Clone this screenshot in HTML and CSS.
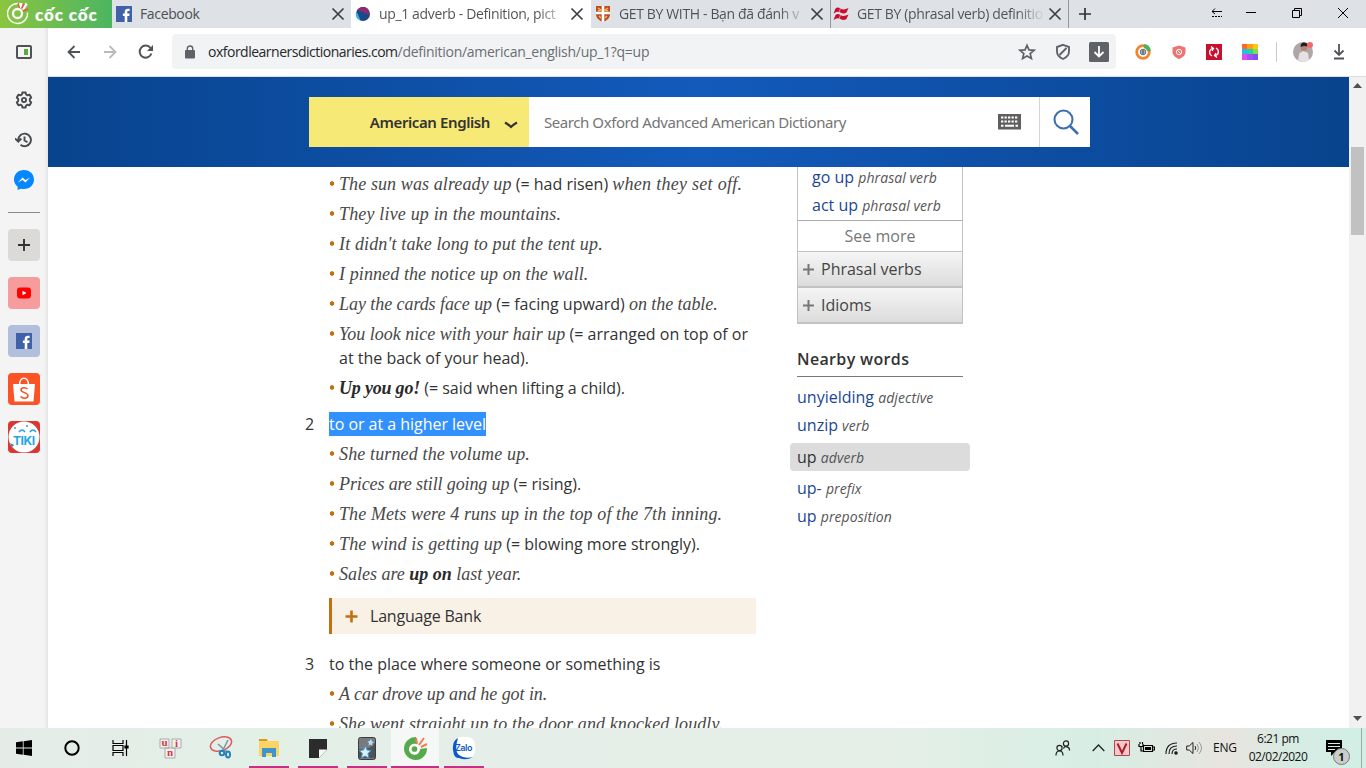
FILE: index.html
```html
<!DOCTYPE html>
<html lang="en">
<head>
<meta charset="utf-8">
<title>up_1 adverb - Definition, pictures</title>
<link rel="stylesheet" href="styles.css">
</head>
<body>
<svg class="defs" width="0" height="0">
  <symbol id="x" viewBox="0 0 14 14"><path d="M1.500 1.500l11 11M12.500 1.500l-11 11" fill="none" stroke="#3c4043" stroke-width="1.700"/></symbol>
  <symbol id="fb" viewBox="0 0 16 16"><path fill="#4060a8" d="M0 0h16v16H0z"/><path fill="#fff" d="M8.700 16V10H6.900V7.600h1.800V6c0-2.200 1.300-3.200 3.200-3.200h1.700V5h-1.200c-.9 0-1.100.4-1.100 1.200v1.400h2.300L13.300 10h-2v6z"/></symbol>
</svg>
<div class="window">
  <header class="tabs">
    <div class="brand">
      <svg width="26" height="26" viewBox="0 0 26 26" fill="none"><path d="M13 3.500A10 10 0 1 0 22.500 12.500" stroke="#fff" stroke-width="1.300"/><circle cx="12.500" cy="13.500" r="4.500" stroke="#fff" stroke-width="2.300"/><path d="M15 8l1-5M17.500 9.500l4-6" stroke="#fff" stroke-width="3"/><path d="M14.500 8L13 3.500M16.500 8.500l3-5M18 11l5-2" stroke="#e8594a" stroke-width="1.500"/></svg>
      <span class="brand-name">cốc cốc</span>
    </div>
    <div class="tab"><svg class="fav" viewBox="0 0 16 16"><use href="#fb"/></svg><span class="t1">Facebook</span><svg class="close"><use href="#x"/></svg></div>
    <div class="tab active"><svg class="fav" viewBox="0 0 16 16"><circle cx="8" cy="8" r="7" fill="#1d4a86"/><path d="M1.500 5C4 1 9-.5 13 3l2 6c-4-1-9-5-13.500-4z" fill="#8b2b73"/><path d="M1 6c2 1 3 5 4.500 8.500C2.500 13.500 0 10 1 6z" fill="#35b5e8"/></svg><span class="fade">up_1 adverb - Definition, pict</span><svg class="close"><use href="#x"/></svg></div>
    <div class="tab"><svg class="fav" viewBox="0 0 16 16"><path d="M1 0h14v8c0 4-3 6.500-7 8-4-1.500-7-4-7-8z" fill="#bd4a28"/><path d="M8 0v16M1 7h14" stroke="#fff" stroke-width="2.600"/><path d="M3 2l3 2-3 1M13 2l-3 2 3 1M4 10l2 2M12 10l-2 2" stroke="#f6bd4e" stroke-width="1.500" fill="none"/></svg><span class="fade">GET BY WITH - Bạn đã đánh v</span><svg class="close"><use href="#x"/></svg></div>
    <div class="tab sep"><svg class="fav" viewBox="0 0 16 16"><g fill="#c8102e"><path d="M2.500 2.500Q4.500 .5 7.500 2.500T15.500 2L13.500 6.500Q10.500 8.500 7.500 6.500T.5 7.500z"/><path d="M2.500 9Q4.500 7 7.500 9T15.500 8.500L13.500 13Q10.500 15 7.500 13T.5 14z"/></g><path d="M7.500 2L6 6.500M7.500 9L6 13" stroke="#eba3ae" stroke-width=".8"/></svg><span class="fade">GET BY (phrasal verb) definitio</span><svg class="close"><use href="#x"/></svg></div>
    <div class="newtab"><svg width="12" height="12" viewBox="0 0 12 12"><path d="M6 0v12M0 6h12" stroke="#333" stroke-width="1.700"/></svg></div>
    <div class="winctl">
      <svg width="10" height="10" viewBox="0 0 10 10" fill="none" stroke="#000"><path d="M0 3.500h10M3 .5l-3 3 3 2.500"/><path d="M0 8.500h10" stroke-dasharray="2 1"/></svg>
      <svg width="10" height="10" viewBox="0 0 10 10"><path d="M0 4.500h10" stroke="#000"/></svg>
      <svg width="10" height="10" viewBox="0 0 10 10" fill="none" stroke="#000"><path d="M.5 2.500h7v7h-7zM2.500 2.500v-2h7v7h-2"/></svg>
      <svg width="10" height="10" viewBox="0 0 10 10"><path d="M0 0l10 10M10 0L0 10" stroke="#000"/></svg>
    </div>
  </header>

  <div class="middle">
    <aside class="rail">
      <svg class="r-panel" width="16" height="14" viewBox="0 0 16 14"><rect x="1" y="1" width="14" height="12" rx="1" fill="none" stroke="#505356" stroke-width="2"/><path fill="#55ae36" d="M8 4h4v6H8z"/></svg>
      <svg class="r-gear" width="18" height="18" viewBox="0 0 18 18" fill="none" stroke="#484b4e" stroke-width="1.900" stroke-linejoin="round"><path d="M7.400 1.500h3.200l.5 2 1.500.9 2-.7 1.600 2.800L14.800 8v2l1.400 1.500-1.600 2.800-2-.7-1.500.9-.5 2H7.400l-.5-2-1.500-.9-2 .7-1.600-2.800L3.200 10V8L1.800 6.500l1.600-2.800 2 .7 1.500-.9z"/><circle cx="9" cy="9" r="2.100"/></svg>
      <svg class="r-hist" width="18" height="16" viewBox="0 0 18 16" fill="none" stroke="#484b4e" stroke-width="1.900"><path d="M3.300 8A6.300 6.300 0 1 1 5.500 12.700M0 6.500l3.300 3.200 3-3.200M9.500 4.500v4l3 1.800"/></svg>
      <svg class="r-msg" width="20" height="20" viewBox="0 0 20 20"><path fill="#0787ff" d="M10 0C4 0 0 4.200 0 9.500c0 3 1.400 5.400 3.600 7.100V20l3.300-1.300c1 .3 2 .4 3.100.4 6 0 10-4.200 10-9.500S16 0 10 0z"/><path d="M4 12.500l4.500-5 3 2.500L16 7.500l-4.500 5-3-2.500z" fill="#fff"/></svg>
      <hr>
      <div class="sq add"><svg width="12" height="12" viewBox="0 0 12 12"><path d="M6 0v12M0 6h12" stroke="#333" stroke-width="1.900"/></svg></div>
      <div class="sq yt"><svg width="14" height="12" viewBox="0 0 14 12"><rect y=".5" width="14" height="11" rx="3" fill="#f00"/><path fill="#fff" d="M5.500 3.700v4.600L9.500 6z"/></svg></div>
      <div class="sq fbk"><svg width="16" height="16"><use href="#fb"/></svg></div>
      <div class="sq shop"><svg width="32" height="32" viewBox="0 0 32 32"><path d="M11.500 12c0-9 9-9 9 0" fill="none" stroke="#fff" stroke-width="1.600"/><path fill="#fff" d="M5 11h22l-1.500 17.500h-19z"/><path d="M19.500 16c-2-2-6.500-1.800-6.500 1s7 2.500 7 5.500c0 3.300-5 3.500-7.500 1" fill="none" stroke="#f4511e" stroke-width="1.500"/></svg></div>
      <div class="sq tiki"><svg width="32" height="32" viewBox="0 0 32 32"><circle cx="16" cy="16" r="15.500" fill="#fff"/><path d="M11 11q3-4 6 0M22 11q3-4 6 0" fill="none" stroke="#22a7df" stroke-width="1.500"/><circle cx="7" cy="7" r="1" fill="#22a7df"/><circle cx="19" cy="5" r="1" fill="#22a7df"/><path d="M2 22l4 2-2 2z" fill="#147fc0"/></svg><b>TIKI</b></div>
    </aside>

    <div class="browser">
      <div class="toolbar">
        <svg class="b1" width="14" height="14" viewBox="0 0 14 14" fill="none" stroke="#505356" stroke-width="1.800"><path d="M13 7H1.500M7.500 1l-6 6 6 6"/></svg>
        <svg class="b2" width="14" height="14" viewBox="0 0 14 14" fill="none" stroke="#b9babc" stroke-width="1.800"><path d="M1 7h11.500M6.500 1l6 6-6 6"/></svg>
        <svg class="b3" width="16" height="16" viewBox="0 0 16 16"><path d="M13.400 9.500A6 6 0 1 1 12.500 4" fill="none" stroke="#505356" stroke-width="2"/><path d="M15 1v6H9z" fill="#505356"/></svg>
        <div class="omni">
          <svg class="lock" width="10" height="14" viewBox="0 0 10 14"><rect y="5" width="10" height="8.500" rx="1" fill="#5f6368"/><path d="M2.300 6V3.500c0-3.300 5.400-3.300 5.400 0V6" fill="none" stroke="#5f6368" stroke-width="1.400"/></svg>
          <span class="url"><b>oxfordlearnersdictionaries.com</b>/definition/american_english/up_1?q=up</span>
          <svg class="star" width="18" height="18" viewBox="0 0 18 18"><path d="M9 2.300l2 4.600 5 .4-3.800 3.300 1.200 4.900L9 12.900l-4.400 2.600 1.200-4.900L2 7.300l5-.4z" fill="none" stroke="#5f6368" stroke-width="1.700"/></svg>
          <svg class="shield" width="16" height="18" viewBox="0 0 16 18"><path d="M8 1.800L14 4v4.500c0 3.800-2.500 6-6 7.500-3.500-1.500-6-3.700-6-7.500V4zM4.500 12L11.500 5" fill="none" stroke="#5f6368" stroke-width="1.900"/></svg>
          <svg class="dl" width="20" height="20" viewBox="0 0 20 20"><rect width="20" height="20" rx="1.500" fill="#5f6368"/><path d="M10 4v10.500M5.500 10l4.500 4.500 4.500-4.500" fill="none" stroke="#fff" stroke-width="1.800"/></svg>
        </div>
        <svg class="e1" width="16" height="16" viewBox="0 0 16 16"><circle cx="8" cy="8" r="6.300" fill="#fff" stroke="#f08532" stroke-width="2.800"/><path d="M9 2A6 6 0 0 1 14 7" fill="none" stroke="#4fb05c" stroke-width="3.800"/><circle cx="8" cy="8" r="2.800" fill="#abb4be" stroke="#68717b"/><path d="M8 6v4" stroke="#444"/></svg>
        <svg class="e2" width="14" height="16" viewBox="0 0 14 16"><path d="M7 1.500l6.500 2V8c0 3.500-3 5.500-6.500 7C3.500 13.500 .5 11.500 .5 8V3.500z" fill="#ed7373"/><circle cx="7" cy="8" r="2.700" fill="none" stroke="#fff" stroke-width=".9"/><path d="M5 6l4 4" stroke="#fff"/></svg>
        <svg class="e3" width="16" height="16" viewBox="0 0 16 16"><path fill="#c8102e" d="M0 0h16v16H0z"/><path d="M6 12C2.500 10 3 5.500 6.500 4.500M10 4C13.500 6 13 10.500 9.500 11.500M5 2.500L7.500 4.500 6 7M11 13.500L8.500 11.500l1.500-2.500" fill="none" stroke="#fff" stroke-width="1.300"/></svg>
        <div class="e4"><i></i><i></i><i></i><i></i><i></i><i></i><i></i><i></i><i></i></div>
        <div class="vline"></div>
        <svg class="avatar" width="20" height="20" viewBox="0 0 20 20"><circle cx="10" cy="10" r="10" fill="#b0a6a6"/><path d="M5 18l1.500-7 4-2 4.500 2 1 7q-5 4-11 0z" fill="#e6e1e3"/><circle cx="11" cy="6" r="3" fill="#b58572"/><path d="M7.500 5q0-5 4-4.500t3 4q-3.500-1-7 .5z" fill="#241f24"/><circle cx="17" cy="3" r="3" fill="#f4686c"/></svg>
        <svg class="down" width="12" height="16" viewBox="0 0 12 16"><path d="M6 0v11M1.500 6.500L6 11l4.500-4.500M1 14.500h10" fill="none" stroke="#505356" stroke-width="1.800"/></svg>
      </div>

      <div class="viewport">
        <main class="page">
          <div class="banner">
            <div class="search">
              <div class="lang"><b>American English</b><svg width="14" height="8" viewBox="0 0 14 8"><path d="M1 1.500q3.500 2 6 4.500 2.500-2.500 6-4.500" fill="none" stroke="#333" stroke-width="2.200"/></svg></div>
              <div class="query"><span>Search Oxford Advanced American Dictionary</span>
                <svg width="23" height="16" viewBox="0 0 23 16"><path d="M0 0h23v15.500H0z" fill="#5f5f5f"/><path d="M3 3.500h17M3 7.500h17" stroke="#fff" stroke-width="2.200" stroke-dasharray="2.300 1.200"/><path d="M3 11.700h2.500M7 11.700h9M17.500 11.700H20" stroke="#fff" stroke-width="2"/></svg></div>
              <div class="go"><svg width="26" height="26" viewBox="0 0 26 26"><circle cx="10.500" cy="10.500" r="9" fill="none" stroke="#3f6fad" stroke-width="2.100"/><path d="M17 17l8 8" stroke="#3f6fad" stroke-width="2.500"/></svg></div>
            </div>
          </div>
          <div class="columns">
            <section class="entry">
              <ul>
                <li class="l1"><i>The sun was already up</i> (= had risen) <i class="w2">when they set off.</i></li>
                <li class="w2"><i>They live up in the mountains.</i></li>
                <li class="w1"><i>It didn't take long to put the tent up.</i></li>
                <li class="l1"><i>I pinned the notice up on the wall.</i></li>
                <li class="n0"><i>Lay the cards face up</i> (= facing upward) <i>on the table.</i></li>
                <li class="two"><i>You look nice with your hair up</i> (= arranged on top of or<br>at the back of your head).</li>
                <li class="n2"><i><b>Up you go!</b></i> (= said when lifting a child).</li>
              </ul>
              <div class="sense"><span class="num">2</span><span class="selected">to or at a higher level</span></div>
              <ul>
                <li class="w1"><i>She turned the volume up.</i></li>
                <li class="n1"><i>Prices are still going up</i> (= rising).</li>
                <li class="l1"><i>The Mets were 4 runs up in the top of the 7th inning.</i></li>
                <li class="w1"><i>The wind is getting up</i> (= blowing more strongly).</li>
                <li><i>Sales are <b>up on</b> last year.</i></li>
              </ul>
              <div class="bank"><svg width="13" height="13" viewBox="0 0 13 13"><path d="M6.500 .5v12M.5 6.500h12" stroke="#c27012" stroke-width="2.600"/></svg>Language Bank</div>
              <div class="sense"><span class="num">3</span><span>to the place where someone or something is</span></div>
              <ul>
                <li class="n0"><i>A car drove up and he got in.</i></li>
                <li class="l1"><i>She went straight up to the door and knocked loudly.</i></li>
              </ul>
            </section>
            <aside class="related">
              <div class="box">
                <div class="matches"><p><a>go up</a> <em>phrasal verb</em></p><p><a>act up</a> <em>phrasal verb</em></p></div>
                <div class="more">See more</div>
                <div class="fold"><svg width="11" height="11" viewBox="0 0 11 11"><path d="M5.500 0v11M0 5.500h11" stroke="#777" stroke-width="2"/></svg>Phrasal verbs</div>
                <div class="fold"><svg width="11" height="11" viewBox="0 0 11 11"><path d="M5.500 0v11M0 5.500h11" stroke="#777" stroke-width="2"/></svg>Idioms</div>
              </div>
              <h4>Nearby words</h4>
              <p><a>unyielding</a> <em>adjective</em></p>
              <p><a>unzip</a> <em>verb</em></p>
              <p class="here"><span>up</span> <em>adverb</em></p>
              <p><a>up-</a> <em>prefix</em></p>
              <p><a>up</a> <em>preposition</em></p>
            </aside>
          </div>
        </main>
        <div class="scroll"><svg width="9" height="5" viewBox="0 0 9 5"><path d="M0 5l4.500-5L9 5z" fill="#505050"/></svg><div class="thumb"></div><svg class="sdown" width="9" height="5" viewBox="0 0 9 5"><path d="M0 0l4.500 5L9 0z" fill="#505050"/></svg></div>
      </div>
    </div>
  </div>

  <footer class="taskbar">
    <div class="task"><svg width="16" height="16" viewBox="0 0 16 16"><path d="M0 2.300L6.800 1.300v6.300H0zM7.600 1.200L16 0v7.600H7.600zM0 8.400h6.800v6.300L0 13.700zM7.600 8.400H16V16l-8.400-1.200z"/></svg></div>
    <div class="task"><svg width="16" height="16" viewBox="0 0 16 16"><circle cx="8" cy="8" r="6.700" fill="none" stroke="#000" stroke-width="2"/></svg></div>
    <div class="task"><svg width="17" height="16" viewBox="0 0 17 16" fill="none" stroke="#000" stroke-width="1.200"><path d="M1 0v3.500h10V0M1 16v-3.500h10V16M1 5.500h10v5H1zM14.500 0v16"/><path d="M13 6h3v2h-3z" fill="#000"/></svg></div>
    <div class="task wide"><svg width="24" height="21" viewBox="0 0 24 21"><g fill="#f4f0f0" stroke="#aaa"><path d="M1 1h9v9H1zM13 1h9v9h-9zM6 10h10v10H6z"/></g><g fill="#d43a41" font-family="Liberation Serif" font-weight="700" font-size="11"><text x="2.500" y="8">u</text><text x="16" y="9">i</text><text x="8" y="18">n</text></g></svg></div>
    <div class="task snip"><svg width="24" height="24" viewBox="0 0 24 24" fill="none"><ellipse cx="12" cy="8" rx="11" ry="6.500" transform="rotate(-20 12 8)" stroke="#dd5b62" stroke-width="1.500"/><path d="M13 16L19 4M18 16L9 8" stroke="#7e919c" stroke-width="1.500"/><circle cx="13" cy="17" r="2.300" stroke="#2383ba" stroke-width="2"/><ellipse cx="19" cy="18.500" rx="2" ry="3" stroke="#2383ba" stroke-width="2"/></svg></div>
    <div class="task open"><svg width="22" height="20" viewBox="0 0 22 20"><path d="M1 1h8l1 3H1z" fill="#d79a18"/><path d="M1 3h20v15H1z" fill="#fbd465"/><path d="M4 19v-9h14v9h-4v-4H8v4z" fill="#3d94cf"/></svg></div>
    <div class="task open"><svg width="18" height="19" viewBox="0 0 18 19"><path d="M0 0h18v10.500L10 19H0z" fill="#2c2c2c"/><path d="M10 19v-8.500h8z" fill="#f6f6f6"/></svg></div>
    <div class="task open"><svg width="18" height="23" viewBox="0 0 18 23"><rect x=".5" y=".5" width="17" height="22" rx="2" fill="#777b7f" stroke="#3b3e40"/><path d="M1 12Q10 14 17 6v15H1z" fill="#505356"/><path d="M7.500 9l1.500 4 4 .5-3 3 .8 4.500-3.800-2L3.500 21l.8-4.500-3-3 4.200-.5z" fill="#d9f0ff" stroke="#4198cc"/><path d="M13 2l1 2.500 2 .5-2 1.500.5 2.500-2-1.500-2 1 .5-2.500-1.500-1.500 2-.5z" fill="#b3e0f7"/></svg></div>
    <div class="task open cur"><svg width="25" height="25" viewBox="0 0 25 25" fill="none"><path d="M13 1A11.500 11.500 0 1 0 24 12l-7 1a5.500 5.500 0 1 1-4-5z" fill="#55aa4a"/><circle cx="11.500" cy="13" r="4" stroke="#fff" stroke-width="2.300" fill="#55aa4a"/><path d="M14 8l-1-6M16 9l5-7M18 11l6-3" stroke="#ec8054" stroke-width="2"/></svg></div>
    <div class="task open zalo"><svg width="24" height="23" viewBox="0 0 24 23"><rect x="1" y="0" width="22" height="22" rx="8" fill="#fff"/><path d="M6 1Q0 4 1 13t6 8q7 3 14-1-9 2-14-2T6 1z" fill="#0c58cf"/></svg><b>Zalo</b></div>
    <div class="tray">
      <svg class="people" width="16" height="16" viewBox="0 0 16 16" fill="none" stroke="#222" stroke-width="1.200"><circle cx="4.500" cy="8" r="2.600"/><path d="M1 15.500c0-6 7-6 7 0M8.500 8.500c1-3 6.500-2 6 2"/><circle cx="11" cy="3.500" r="2.600"/></svg>
      <svg class="chev" width="13" height="8" viewBox="0 0 13 8"><path d="M.7 7l5.800-6 5.800 6" fill="none" stroke="#222" stroke-width="1.300"/></svg>
      <svg class="vkey" width="16" height="16" viewBox="0 0 16 16"><path d="M.5.500h15v15H.5z" fill="#f3c8c7" stroke="#b0474c"/><path d="M3.500 3.500L8 13l4.500-9.500" fill="none" stroke="#a91e2b" stroke-width="2"/></svg>
      <svg class="batt" width="17" height="12" viewBox="0 0 17 12"><path d="M5.500 3.500h9v6h-9zM15 5h1.500v3H15M1 2v2.500h4V2M2 0v2M4.500 0v2M3 4v5h2" fill="none" stroke="#000" stroke-width="1.200"/><path d="M7 5h6v3H7z"/></svg>
      <svg class="wifi" width="13" height="13" viewBox="0 0 13 13" fill="none" stroke="#222" stroke-width="1.200"><path d="M1 12Q1 1 12 1M4 12q0-8 8-8M7 12q0-5 5-5"/><circle cx="11" cy="11" r="1.200" fill="#000"/></svg>
      <svg class="vol" width="17" height="14" viewBox="0 0 17 14" fill="none" stroke="#222"><path d="M.7 5h2.500L7 1.500v11L3.200 9H.7z"/><path d="M9 5q1.500 2 0 4"/><path d="M11 3q3 4 0 8M13 1q5 6 0 12" stroke="#999"/></svg>
      <span class="eng">ENG</span>
      <div class="clock"><span>6:21 pm</span><span>02/02/2020</span></div>
      <div class="note"><svg width="16" height="16" viewBox="0 0 16 16"><path d="M0 0h16v12H9l-4 4v-4H0z"/><path d="M2 3.500h12M2 6.500h12M2 9.500h7" stroke="#d9eee4"/></svg><b>1</b></div>
      <div class="peek"></div>
    </div>
  </footer>
</div>
</body>
</html>
```
FILE: styles.css
```css
* { box-sizing: border-box; }
body { margin: 0; width: 1366px; height: 768px; overflow: hidden; background: #fff; font-family: "Open Sans", sans-serif; color: #333; }
svg { display: block; flex: none; }
p, ul, h4 { margin: 0; padding: 0; }
a { color: #1b4695; }
.defs { position: absolute; }
.window { display: flex; flex-direction: column; height: 768px; }

/* tab strip */
.tabs { display: flex; height: 28px; background: #dee1e6; flex: none; }
.brand { width: 112px; display: flex; align-items: center; padding: 0 0 2px 5px; background: linear-gradient(90deg, #8bc540, #4cb560); color: #fff; }
.brand-name { font: 800 17px/20px Lato, sans-serif; letter-spacing: .9px; margin: 4px 0 0 4px; white-space: nowrap; }
.tab { width: 239px; display: flex; align-items: center; padding: 0 6px 0 4px; font-size: 14px; line-height: 20px; color: #4d5054; letter-spacing: -.36px; }
.tab.active { width: 240px; padding-right: 7px; }
.tab.active { background: #fff; }
.tab.sep { border-left: 1px solid #93969b; border-right: 1px solid #93969b; padding: 0 6px 0 2px; }
.tab span { flex: 1; margin-left: 8px; white-space: nowrap; }
.tab .fade { background: linear-gradient(90deg, #4d5054 160px, #4d505422 184px); -webkit-background-clip: text; background-clip: text; color: transparent; }
.fav { width: 16px; height: 16px; }
.close { width: 14px; height: 14px; }
.newtab { margin-left: 10px; display: flex; align-items: center; }
.winctl { margin-left: auto; display: flex; align-items: center; padding: 0 18px 2px 0; }
.winctl svg + svg { margin-left: 24px; }
.winctl svg:nth-child(3), .winctl svg:nth-child(4) { margin-left: 36px; }

/* left rail */
.middle { display: flex; height: 700px; flex: none; }
.rail { width: 48px; background: #f4f4f4; display: flex; flex-direction: column; align-items: center; box-shadow: inset -4px 0 4px -3px #ddd; padding-top: 17px; }
.r-gear { margin-top: 32px; }
.r-hist { margin-top: 23px; }
.r-msg { margin-top: 22px; }
.rail hr { width: 32px; height: 1px; border: 0; background: #888; margin: 22px 0 16px; }
.sq { width: 32px; height: 32px; border-radius: 4px; display: flex; align-items: center; justify-content: center; margin-bottom: 16px; flex: none; overflow: hidden; }
.add { background: #dcdad6; }
.yt { background: #f79c9c; }
.fbk { background: #b2bfdc; }
.shop { background: #fb5325; }
.tiki { background: #d93931; position: relative; }
.tiki b { position: absolute; left: 5px; top: 12px; font: 700 12px/15px Inter, sans-serif; color: #22a7df; letter-spacing: -.4px; }

/* toolbar */
.browser { width: 1318px; display: flex; flex-direction: column; }
.toolbar { height: 49px; display: flex; align-items: center; padding: 0 20px 1px 19px; border-bottom: 1px solid #dcdfe1; flex: none; }
.b2 { margin-left: 22px; }
.b3 { margin-left: 21px; }
.omni { width: 944px; height: 35px; margin-left: 18px; background: #f1f3f4; border-radius: 4px; display: flex; align-items: center; padding: 0 7px 0 13px; }
.url { font-size: 14px; line-height: 20px; margin-left: 13px; flex: 1; color: #6b6e72; white-space: nowrap; letter-spacing: -.28px; }
.url b { font-weight: 400; color: #26282a; letter-spacing: -.5px; }
.shield { margin-left: 19px; }
.dl { margin-left: 18px; }
.e1 { margin-left: 19px; }
.e2 { margin-left: 21px; }
.e3 { margin-left: 20px; }
.e4 { width: 16px; height: 16px; margin-left: 20px; display: grid; grid-template-columns: 5px 6px 5px; }
.e4 i { background: #ff6b1c; }
.e4 i:nth-child(2) { background: #ff9b16; }
.e4 i:nth-child(3) { background: #ffc517; }
.e4 i:nth-child(4) { background: #21bdf0; }
.e4 i:nth-child(5) { background: #1fd3a2; }
.e4 i:nth-child(6) { background: #7ae04a; }
.e4 i:nth-child(7) { background: #e44ce8; }
.e4 i:nth-child(8) { background: #a94cf0; }
.e4 i:nth-child(9) { background: #7c50f4; }
.vline { width: 1px; height: 20px; background: #c6c8ca; margin: 0 16px 0 18px; }
.down { margin-left: 20px; }

/* page */
.viewport { display: flex; height: 651px; }
.page { width: 1301px; overflow: hidden; }
.banner { height: 90px; background: linear-gradient(90deg, #08438d, #135abb 50%, #08438d); padding: 20px 0 0 261px; }
.search { display: flex; width: 781px; height: 50px; background: #fff; }
.lang { width: 220px; background: #f7e976; display: flex; align-items: center; justify-content: flex-end; padding-right: 11px; font: 15px/22px "Noto Sans", sans-serif; letter-spacing: -.4px; white-space: nowrap; }
.lang b { font-weight: 600; }
.lang svg { margin: 5px 0 0 14px; }
.query { width: 511px; border-right: 1px solid #d5d5d5; display: flex; align-items: center; justify-content: space-between; padding: 0 18px 0 15px; font: 15px/22px "Noto Sans", sans-serif; letter-spacing: -.43px; color: #757575; white-space: nowrap; }
.go { width: 50px; display: flex; align-items: center; justify-content: center; padding-left: 2px; }
.columns { display: flex; height: 561px; overflow: hidden; }
.entry { padding: 5px 0 0 257px; box-sizing: content-box; width: 451px; font-size: 16px; line-height: 24px; }
.entry ul { list-style: none; padding-left: 24px; margin-bottom: 12px; }
.entry li { padding-left: 10px; height: 24px; margin-bottom: 6px; white-space: nowrap; background: radial-gradient(circle at 3px 11.500px, #c27012 1.900px, transparent 2.600px) no-repeat; }
.entry li.two { height: 48px; }
.entry i { font-family: "Liberation Serif", serif; font-size: 18px; line-height: 20px; color: #484848; }
.entry i b { color: #2a2a2a; }
.w2 i, .entry .w2 { letter-spacing: .17px; }
.entry i.w2 { letter-spacing: .28px; }
.w1 i { letter-spacing: .14px; }
.l1 i { letter-spacing: .1px; }
.n0 i { letter-spacing: -.06px; }
.n1 i { letter-spacing: -.12px; }
.n2 i { letter-spacing: -.2px; }
.sense { display: flex; margin-bottom: 6px; white-space: nowrap; }
.num { width: 24px; }
.selected { background: #3390ff; color: #fff; letter-spacing: -.03px; }
.bank { margin: 0 0 18px 24px; width: 427px; height: 36px; background: #f9f0e6; border-left: 3px solid #c27012; display: flex; align-items: center; padding-left: 13px; letter-spacing: -.2px; }
.bank svg { margin-right: 12px; }

/* related panel */
.related { margin-left: 41px; width: 166px; font-size: 16px; line-height: 24px; white-space: nowrap; }
.related em { font-size: 14px; color: #555; letter-spacing: .08px; }
.box { border: 1px solid #c2c2c2; border-top: 0; }
.matches { display: flow-root; padding-left: 14px; height: 54px; border-bottom: 1px solid #aaa; }
.matches p { line-height: 24px; margin-top: -2px; margin-bottom: 5px; }
.more { height: 30px; line-height: 30px; text-align: center; color: #777; }
.fold { height: 36px; border-top: 1px solid #c2c2c2; border-bottom: 1px solid #c2c2c2; background: linear-gradient(#f5f5f5, #dcdcdc); display: flex; align-items: center; padding-left: 5px; color: #444; }
.fold svg { margin-right: 7px; }
.related h4 { font-size: 16px; font-weight: 600; letter-spacing: .35px; line-height: 24px; margin-top: 23px; padding-bottom: 5px; border-bottom: 1px solid #777; margin-bottom: 6px; color: #333; height: 30px; }
.related > p { height: 28px; line-height: 28px; }
.related .here { width: 180px; margin: 4px 0 3px -7px; padding-left: 7px; background: #dcdcdc; border-radius: 4px; }

.scroll { width: 17px; background: #f1f1f1; display: flex; flex-direction: column; align-items: center; padding-top: 6px; }
.thumb { width: 13px; height: 88px; background: #c1c1c1; margin-top: 59px; }
.sdown { margin-top: auto; margin-bottom: 7px; }

/* taskbar */
.taskbar { height: 40px; display: flex; background: linear-gradient(90deg, #e5ece8 0, #e2f0e6 20%, #e5eee8 35%, #e5efe7 65%, #d7eee4 80%, #e8e4df 90%, #d5ece3 95%, #d3efe5); }
.task { width: 48px; display: flex; align-items: center; justify-content: center; }
.task.wide { width: 53px; }
.task.snip { width: 47px; }
.task.open { width: 49px; background: linear-gradient(#c33180, #c33180) 50% 100% / 40px 2px no-repeat; }
.task.open.cur { width: 48px; background: linear-gradient(#c33180, #c33180) 0 100% / 48px 2px no-repeat #f5f8f6; }
.zalo { position: relative; }
.zalo b { position: absolute; left: 16px; top: 13px; font: 600 9px/13px Inter, sans-serif; color: #145bc4; letter-spacing: -.5px; }
.tray { margin-left: auto; display: flex; align-items: center; color: #111; font-size: 12px; line-height: 18px; width: 311px; }
.chev { margin-left: 21px; }
.vkey { margin-left: 9px; }
.batt { margin-left: 8px; }
.wifi { margin-left: 10px; }
.vol { margin-left: 8px; }
.eng { margin-left: 10px; width: 24px; letter-spacing: -.2px; }
.clock { width: 62px; margin-left: 10px; display: flex; flex-direction: column; align-items: center; white-space: nowrap; letter-spacing: -.5px; }
.note { position: relative; margin-left: 17px; }
.note b { position: absolute; left: 7px; top: 8px; width: 17px; height: 17px; border: 1px solid #777; border-radius: 50%; background: #c9ceca; font: 700 11px/15px "Open Sans"; text-align: center; }
.peek { margin-left: auto; width: 5px; height: 40px; border-left: 1px solid #9aa9a2; }
```
